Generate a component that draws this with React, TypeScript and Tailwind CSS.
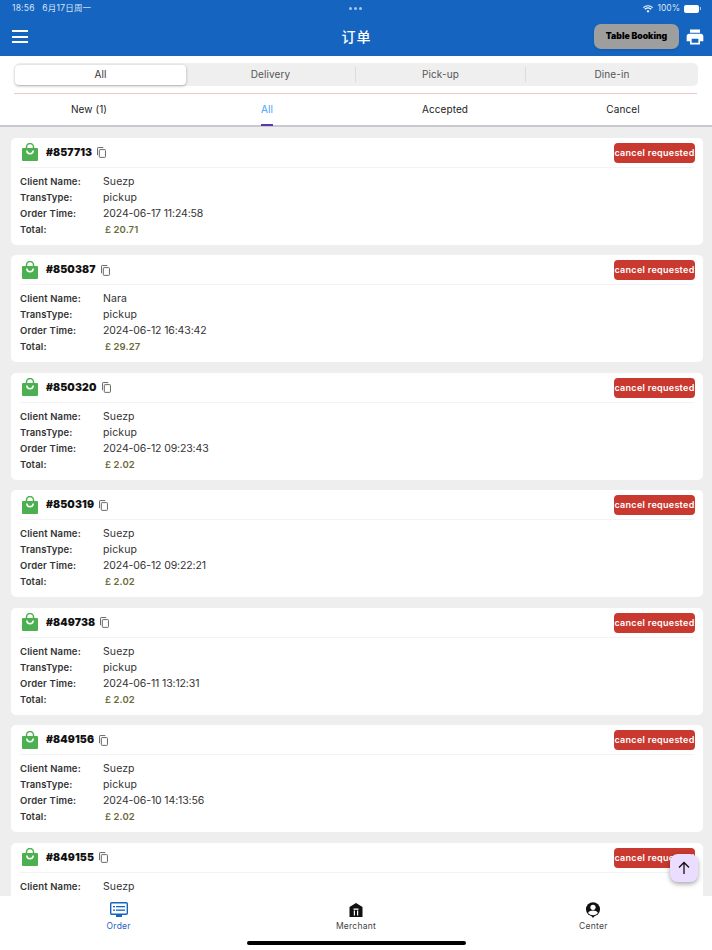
import React from "react";

const orders = [
  { id: "#857713", name: "Suezp", time: "2024-06-17 11:24:58", total: "20.71" },
  { id: "#850387", name: "Nara", time: "2024-06-12 16:43:42", total: "29.27" },
  { id: "#850320", name: "Suezp", time: "2024-06-12 09:23:43", total: "2.02" },
  { id: "#850319", name: "Suezp", time: "2024-06-12 09:22:21", total: "2.02" },
  { id: "#849738", name: "Suezp", time: "2024-06-11 13:12:31", total: "2.02" },
  { id: "#849156", name: "Suezp", time: "2024-06-10 14:13:56", total: "2.02" },
  { id: "#849155", name: "Suezp", time: "2024-06-10 14:12:11", total: "2.02" },
];

function Bag() {
  return (
    <svg width="16" height="18" viewBox="0 0 16 18" className="block">
      <path d="M1 5h14a1 1 0 0 1 1 1l0 11a1 1 0 0 1-1 1H1a1 1 0 0 1-1-1V6a1 1 0 0 1 1-1z" fill="#4caf50" />
      <path d="M4.5 6V4a3.5 3.5 0 0 1 7 0v2" fill="none" stroke="#4caf50" strokeWidth="1.500" />
      <path d="M4.800 7.500a3.200 3.200 0 0 0 6.400 0" fill="none" stroke="#fff" strokeWidth="1.500" />
    </svg>
  );
}

function Copy() {
  return (
    <svg width="9" height="11" viewBox="0 0 10 12" fill="none" stroke="#666" strokeWidth="1.100" className="block">
      <path d="M0.600 9V1.200a.7.7 0 0 1 .7-.7H7" />
      <rect x="2.600" y="2.800" width="6.800" height="8.600" rx="0.800" />
    </svg>
  );
}

function Row({ label, children }: { label: string; children: React.ReactNode }) {
  return (
    <div className="flex items-center h-4">
      <span className="w-[83px] text-[9.5px] font-semibold tracking-[0.15px] text-[#333]">{label}</span>
      {children}
    </div>
  );
}

function Card({ o }: { o: (typeof orders)[number] }) {
  return (
    <div className="bg-white rounded-[5px] h-[107px] mb-[10.5px] px-[9px] shrink-0">
      <div className="flex items-center h-[30px] pt-[1px] border-b border-[#f3f3f3]">
        <div className="ml-[2px] mr-[8px] -mt-[1px]"><Bag /></div>
        <span className="text-[10.5px] font-black text-[#111] tracking-[0.1px]">{o.id}</span>
        <div className="ml-[5px]"><Copy /></div>
        <span className="ml-auto -mr-px h-5 w-[81px] rounded-[4px] bg-[#c9392f] text-white text-[9px] font-semibold tracking-[0.3px] whitespace-nowrap flex items-center justify-center">
          cancel requested
        </span>
      </div>
      <div className="pt-[6px] flex flex-col">
        <Row label="Client Name:"><span className="text-[10.5px] tracking-[0.1px] text-[#333]">{o.name}</span></Row>
        <Row label="TransType:"><span className="text-[10.5px] tracking-[0.1px] text-[#333]">pickup</span></Row>
        <Row label="Order Time:"><span className="text-[10.5px] -tracking-[0.12px] text-[#333]">{o.time}</span></Row>
        <Row label="Total:"><span className="ml-[2px] text-[9.5px] font-semibold tracking-[0.1px] text-[#6b6b3a]">£ {o.total}</span></Row>
      </div>
    </div>
  );
}

export default function App() {
  return (
    <div className="w-[712px] h-[950px] relative overflow-hidden flex flex-col bg-[#eeeeee] font-['Inter','Noto_Sans_CJK_SC',sans-serif]">
      <header className="bg-[#1565c0] h-[56px] shrink-0 relative text-white">
        <div className="flex items-center justify-between h-[17px] pl-3 pr-[11px] text-[#d5e3f5] text-[8.5px]">
          <span className="tracking-[0.2px]">18:56&nbsp;&nbsp;&nbsp;6月17日周一</span>
          <div className="flex items-center gap-[3px]">
            <svg width="10" height="8" viewBox="0 0 24 18" fill="#fff" className="mr-[1px]">
              <path d="M12 18l-3.500-4a5 5 0 0 1 7 0zM5.500 11L3 8.200a13 13 0 0 1 18 0L18.500 11a9.300 9.300 0 0 0-13 0zM1.500 6.500L0 4.500a18 18 0 0 1 24 0l-1.500 2a15.500 15.500 0 0 0-21 0z" />
            </svg>
            <span>100%</span>
            <div className="flex items-center ml-[1px]">
              <div className="w-[15px] h-[8px] rounded-[2px] bg-white" />
              <div className="w-[1px] h-[3px] ml-[1px] bg-[#a9c6e8]" />
            </div>
          </div>
        </div>
        <div className="flex items-center h-[39px] pl-3 pr-[7px]">
          <div className="w-4 flex flex-col gap-[3.5px]">
            <div className="h-[2px] bg-white" />
            <div className="h-[2px] bg-white" />
            <div className="h-[2px] bg-white" />
          </div>
          <div className="flex-1 text-center text-[14px] font-medium tracking-[1px] pl-[91px]">订单</div>
          <div className="w-[85px] h-[25px] rounded-[7px] bg-[#9e9e9e] shadow-sm text-black text-[8.7px] font-black flex items-center justify-center">
            Table Booking
          </div>
          <svg width="20" height="20" viewBox="0 0 24 24" fill="#fff" className="ml-[6px]">
            <path d="M19 8H5c-1.660 0-3 1.340-3 3v6h4v4h12v-4h4v-6c0-1.660-1.340-3-3-3zm-3 11H8v-5h8v5zM18 3H6v4h12V3z" />
          </svg>
        </div>
        <div className="absolute left-[349px] top-[7px] flex gap-[2px]">
          <i className="w-[3px] h-[3px] rounded-full bg-[#a9c6e8]" />
          <i className="w-[3px] h-[3px] rounded-full bg-[#a9c6e8]" />
          <i className="w-[3px] h-[3px] rounded-full bg-[#a9c6e8]" />
        </div>
      </header>

      <section className="bg-white h-[71px] shrink-0 border-b-2 border-[#c9c9cf]">
        <div className="px-[15px] pt-[7px]">
          <div className="h-[23px] w-[683px] rounded-[5px] bg-[#efefef] flex items-center text-[10px] tracking-[0.1px] text-[#555]">
            <div className="w-[171px] h-[20px] rounded-[4px] bg-white shadow-[0_1px_3px_rgba(0,0,0,0.3)] flex items-center justify-center text-[#333]">All</div>
            <div className="w-[170px] text-center border-r border-[#dcdcdc]">Delivery</div>
            <div className="w-[170px] text-center border-r border-[#dcdcdc]">Pick-up</div>
            <div className="flex-1 text-center">Dine-in</div>
          </div>
          <div className="mt-[7px] h-px -ml-px bg-[#f7c6c2]" />
        </div>
        <div className="grid grid-cols-4 h-[31px] text-[10px] tracking-[0.1px] text-[#222]">
          <div className="flex items-center justify-center"><span>New (1)</span></div>
          <div className="relative flex items-center justify-center text-[#42a5f5]">
            All
            <div className="absolute -bottom-px left-[83px] w-[12px] h-[2px] bg-[#5e35b1]" />
          </div>
          <div className="flex items-center justify-center">Accepted</div>
          <div className="flex items-center justify-center">Cancel</div>
        </div>
      </section>

      <main className="flex-1 min-h-0 overflow-hidden pt-[10.7px] pl-[11px] pr-[9px] flex flex-col">
        {orders.map((o) => <Card key={o.id} o={o} />)}
      </main>

      <nav className="h-[54px] shrink-0 bg-white relative grid grid-cols-3 pt-[6px] text-[8.5px] tracking-[0.25px] text-[#444]">
        <div className="flex flex-col items-center text-[#1f62c4]">
          <svg width="18" height="16" viewBox="0 0 18 16" className="block">
            <rect x="0.700" y="0.700" width="16.600" height="11.600" rx="1" fill="none" stroke="#1565c0" strokeWidth="1.400" />
            <rect x="6" y="13" width="6" height="2" fill="#1565c0" />
            <rect x="3" y="4" width="2" height="1.300" fill="#1565c0" />
            <rect x="6" y="4" width="9" height="1.300" fill="#1565c0" />
            <rect x="3" y="7.500" width="2" height="1.300" fill="#1565c0" />
            <rect x="6" y="7.500" width="9" height="1.300" fill="#1565c0" />
          </svg>
          <span className="mt-[1.5px]">Order</span>
        </div>
        <div className="flex flex-col items-center">
          <svg width="16" height="16" viewBox="0 0 16 16" className="block">
            <path d="M8 1L1.500 5v10h13V5z" fill="#111" />
            <rect x="5.500" y="6.500" width="5" height="1.300" fill="#fff" />
            <rect x="5.800" y="8.500" width="1.200" height="5" fill="#fff" />
            <rect x="9" y="8.500" width="1.200" height="5" fill="#fff" />
          </svg>
          <span className="mt-[1.5px]">Merchant</span>
        </div>
        <div className="flex flex-col items-center">
          <svg width="16" height="16" viewBox="0 0 16 16" className="block">
            <circle cx="8" cy="7.200" r="7" fill="#111" />
            <path d="M6 13.500h4L8 16z" fill="#111" />
            <circle cx="8" cy="5.300" r="2.600" fill="#fff" />
            <path d="M3 11c1-2 3-2.600 5-2.600s4 .6 5 2.600a6.500 6.500 0 0 1-10 0z" fill="#fff" />
          </svg>
          <span className="mt-[1.5px]">Center</span>
        </div>
        <div className="absolute left-[247px] bottom-[5px] w-[219px] h-[4px] rounded-full bg-black" />
      </nav>

      <button className="absolute left-[670px] top-[854px] w-[28px] h-[28px] rounded-[8px] bg-[#eaddff] shadow-[0_2px_5px_rgba(0,0,0,0.35)] flex items-center justify-center">
        <svg width="14" height="14" viewBox="0 0 14 14" fill="none" stroke="#111" strokeWidth="1.300">
          <path d="M7 13V1.500M2 6.500l5-5 5 5" />
        </svg>
      </button>
    </div>
  );
}
